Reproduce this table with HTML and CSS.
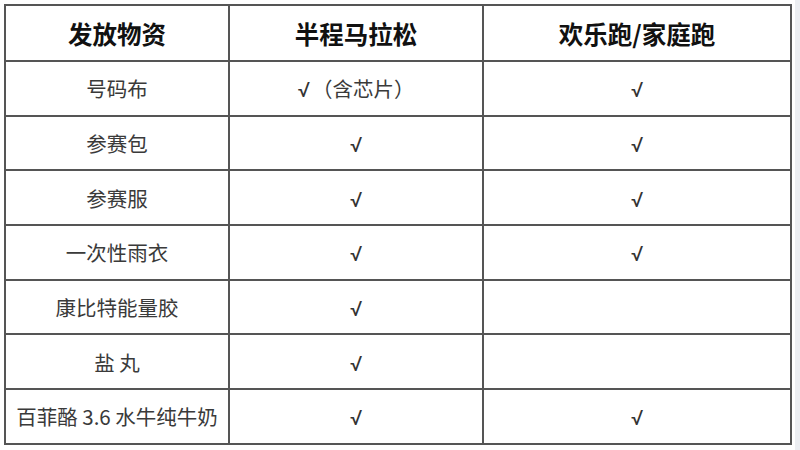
FILE: index.html
```html
<!DOCTYPE html>
<html lang="zh">
<head>
<meta charset="utf-8">
<link rel="stylesheet" href="styles.css">
</head>
<body>
<div class="page">
  <div class="sheet">
    <table class="items">
      <colgroup>
        <col class="c1"><col class="c2"><col class="c3">
      </colgroup>
      <thead>
        <tr><th>发放物资</th><th>半程马拉松</th><th>欢乐跑/家庭跑</th></tr>
      </thead>
      <tbody>
        <tr><td>号码布</td><td><span class="tick spaced">√</span>（含芯片）</td><td><span class="tick">√</span></td></tr>
        <tr><td>参赛包</td><td><span class="tick">√</span></td><td><span class="tick">√</span></td></tr>
        <tr><td>参赛服</td><td><span class="tick">√</span></td><td><span class="tick">√</span></td></tr>
        <tr><td>一次性雨衣</td><td><span class="tick">√</span></td><td><span class="tick">√</span></td></tr>
        <tr><td>康比特能量胶</td><td><span class="tick">√</span></td><td></td></tr>
        <tr><td>盐 丸</td><td><span class="tick">√</span></td><td></td></tr>
        <tr><td>百菲酪 3.6 水牛纯牛奶</td><td><span class="tick">√</span></td><td><span class="tick">√</span></td></tr>
      </tbody>
    </table>
  </div>
  <div class="strip"></div>
</div>
</body>
</html>
```

FILE: styles.css
```css
html, body {
  margin: 0;
  padding: 0;
  background: #ffffff;
}
.page {
  display: flex;
  width: 800px;
  height: 450px;
}
.sheet {
  width: 795px;
  padding: 4px 0 0 4px;
  box-sizing: border-box;
  background: #ffffff;
}
.strip {
  flex: 1;
  background: #eceef2;
}
.items {
  border-collapse: collapse;
  width: 788px;
  table-layout: fixed;
  font-family: "Noto Sans CJK SC", "Noto Sans", sans-serif;
}
.c1 { width: 224px; }
.c2 { width: 254px; }
.c3 { width: 308px; }
.items th, .items td {
  border: 2px solid #555555;
  text-align: center;
  vertical-align: middle;
  padding: 0;
}
.items th {
  height: 54px;
  font-size: 24.5px;
  font-weight: 700;
  color: #111111;
}
.items td {
  height: 52.7px;
  font-size: 20.5px;
  color: #3a3a3a;
}
.tick {
  font-family: "Roboto", sans-serif;
  font-size: 21px;
  color: #333333;
}
.spaced {
  margin-right: 2px;
}
```
